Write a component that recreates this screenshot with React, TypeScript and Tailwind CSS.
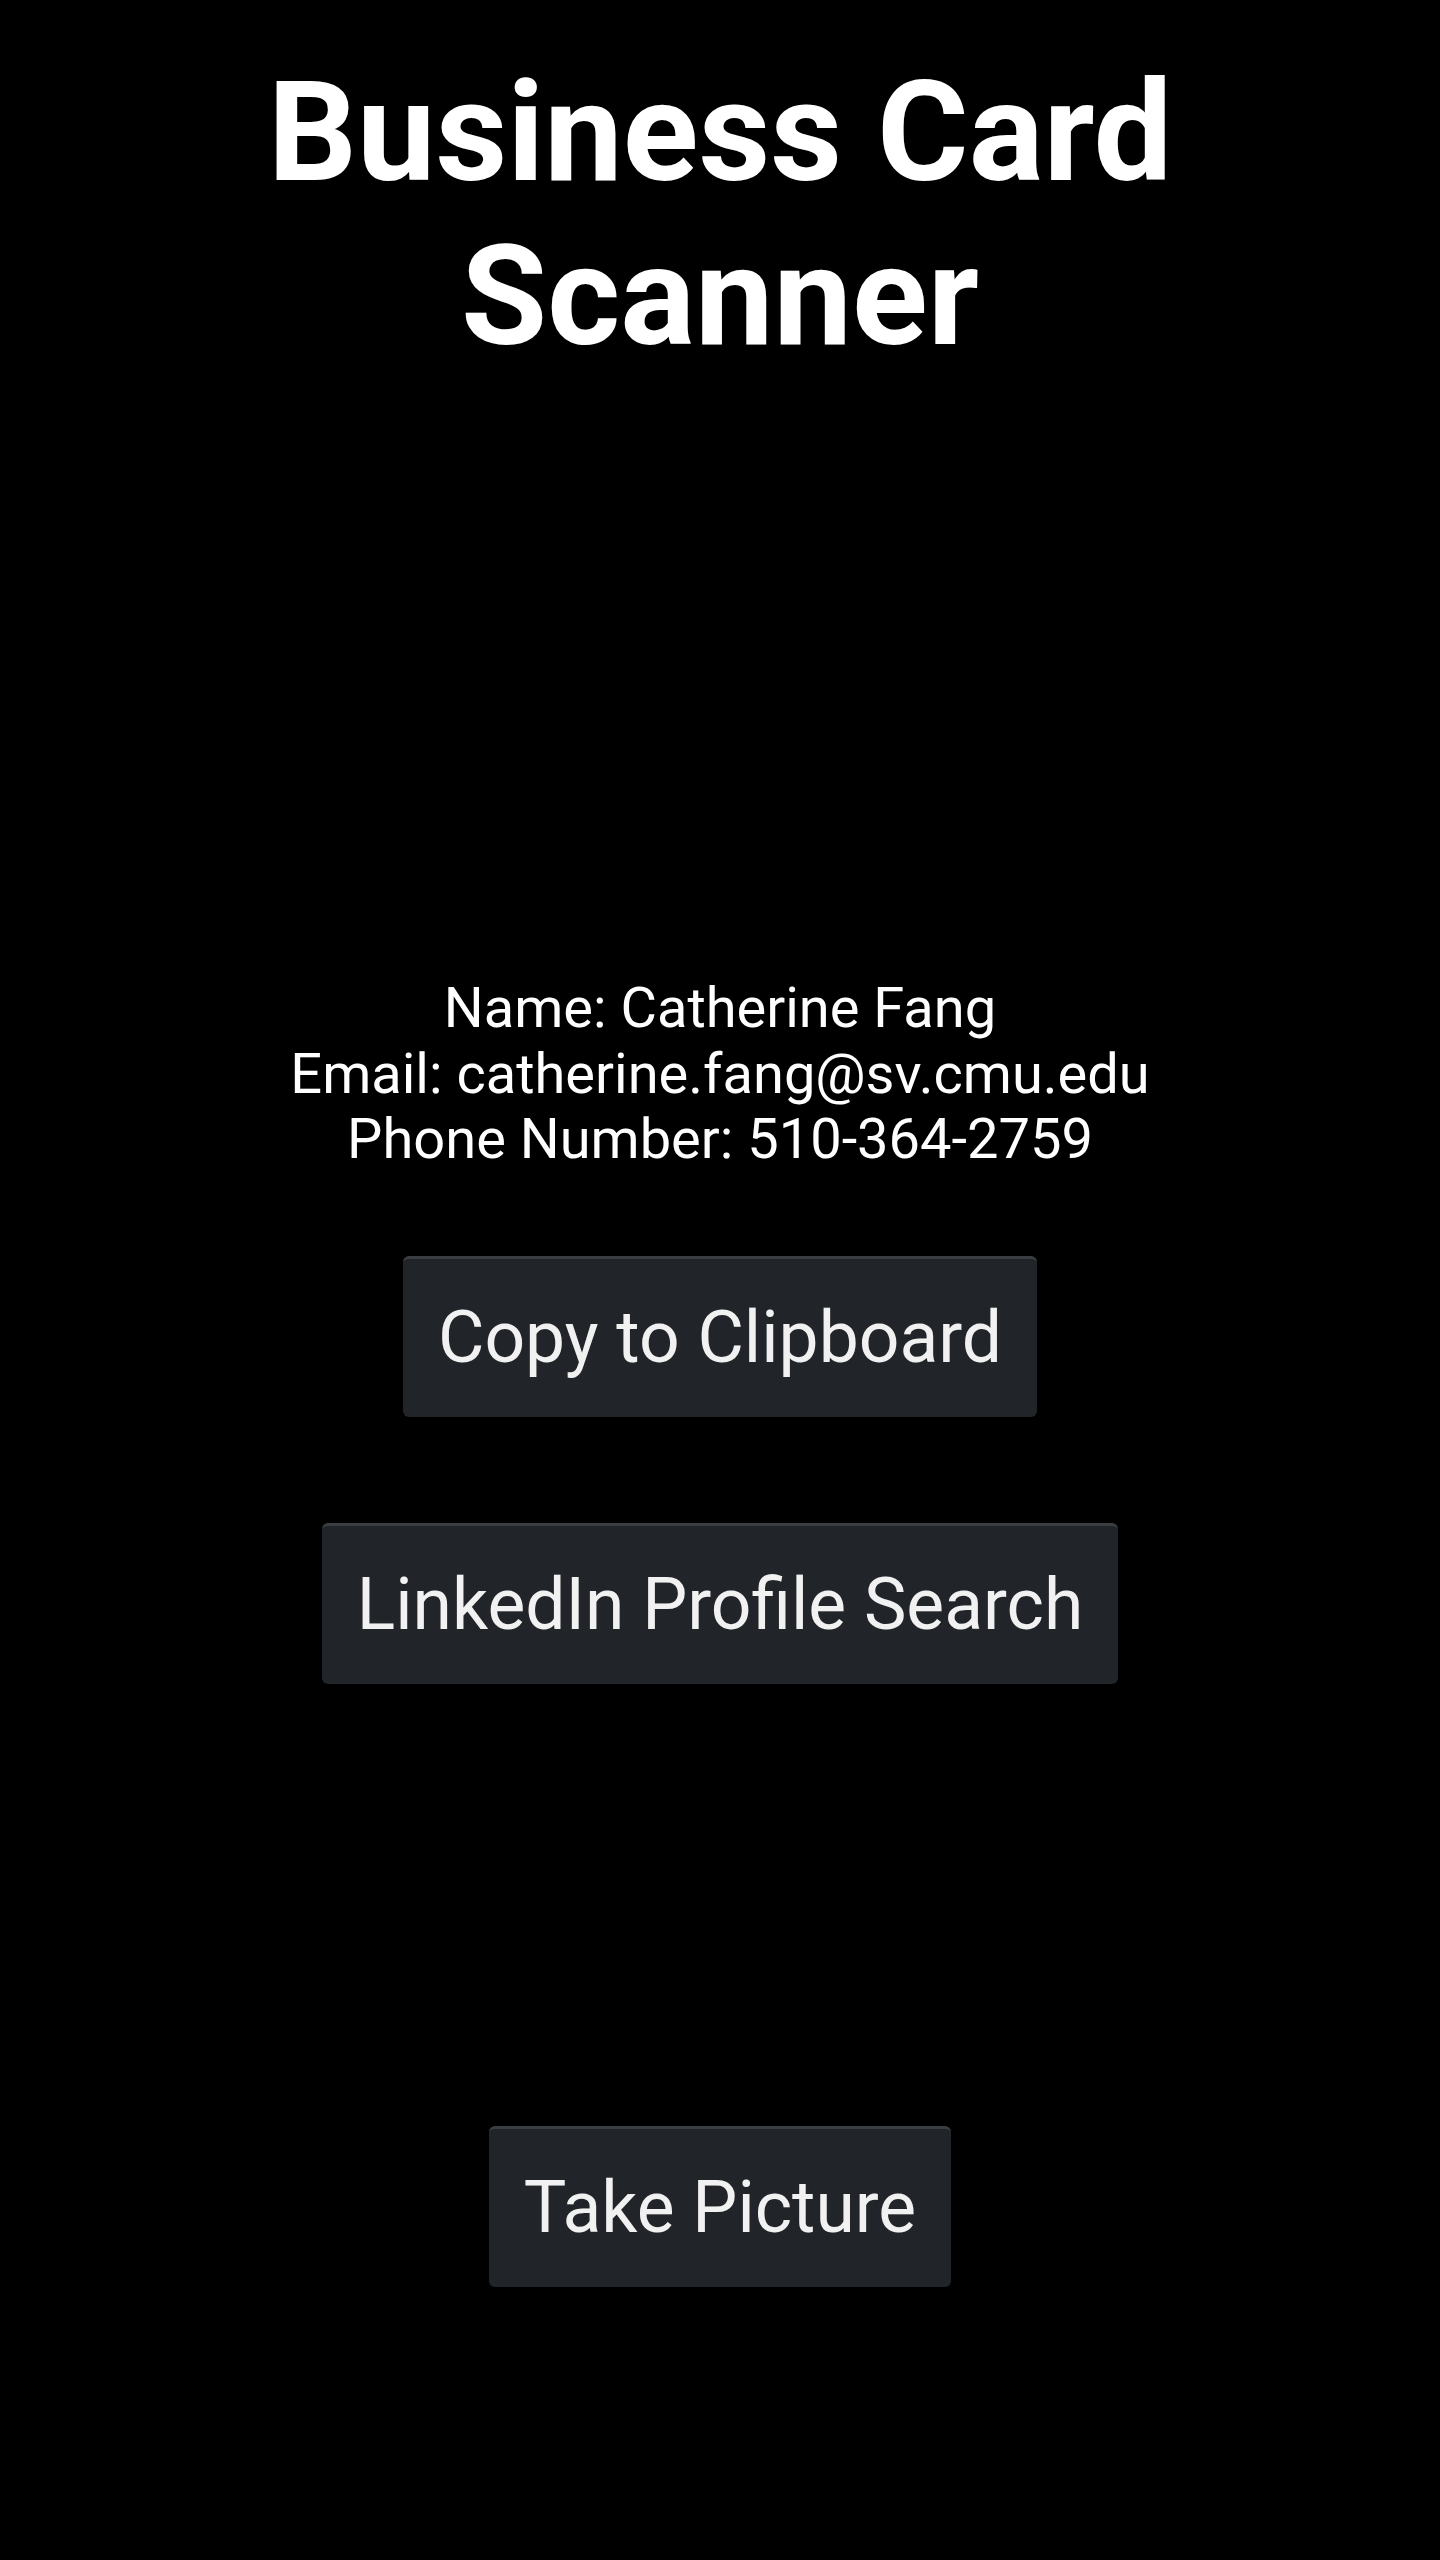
import React from "react";

const info = {
  name: "Catherine Fang",
  email: "catherine.fang@sv.cmu.edu",
  phone: "510-364-2759",
};

const DarkButton: React.FC<{ label: string }> = ({ label }) => {
  return (
    <button className="h-[161px] px-[35px] flex items-center justify-center bg-[#212529] border-t-[3px] border-[#3a3e42] rounded-[6px] shadow-[0_2px_3px_rgba(0,0,0,0.6)] text-[#f1f1f1] text-[71.4px] leading-none">
      {label}
    </button>
  );
};

export default function App() {
  return (
    <div
      className="w-full min-h-[2560px] bg-black text-white flex flex-col items-center"
      style={{ fontFamily: "Roboto, 'Noto Sans', sans-serif" }}
    >
      {/* Title */}
      <h1 className="mt-[50px] text-center font-bold text-[140px] leading-[164px] w-[1000px]">
        Business Card Scanner
      </h1>

      {/* scanned image area (empty) */}
      <div className="h-[598px]" />

      {/* Card info */}
      <div className="text-center text-[56px] leading-[65.6px] text-white">
        <div>Name: {info.name}</div>
        <div>Email: {info.email}</div>
        <div>Phone Number: {info.phone}</div>
      </div>

      <div className="mt-[83px]">
        <DarkButton label="Copy to Clipboard" />
      </div>

      <div className="mt-[106px]">
        <DarkButton label="LinkedIn Profile Search" />
      </div>

      <div className="mt-[442px]">
        <DarkButton label="Take Picture" />
      </div>
    </div>
  );
}
